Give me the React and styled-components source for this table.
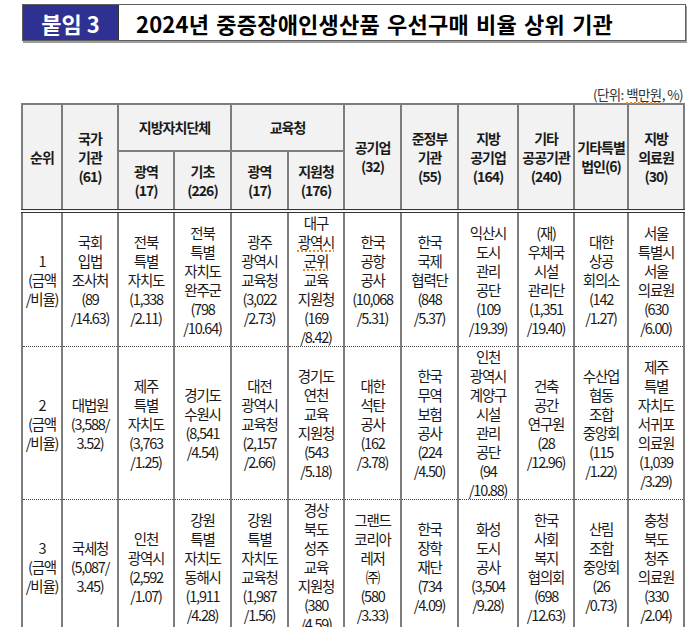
import React from 'react';
import styled, { createGlobalStyle } from 'styled-components';

const Global = createGlobalStyle`
  html, body { margin: 0; padding: 0; background: #fff; }
  body {
    font-family: "Noto Sans CJK KR", "Noto Sans", sans-serif;
    color: #111;
  }
`;

const Page = styled.div`
  padding: 4px 0 0 21px;
  width: 679px;
`;

const TitleBox = styled.div`
  box-sizing: border-box;
  margin-left: 1px;
  width: 664px;
  height: 37px;
  display: flex;
  border: 1px solid #5e5e5e;
  box-shadow: 1px 2px 0 #9c9c9c;
  background: #fff;
`;

const Badge = styled.div`
  width: 95px;
  flex: none;
  background: #2e3192;
  border-right: 1px solid #333;
  color: #fff;
  display: flex;
  align-items: center;
  justify-content: center;
  font-size: 22px;
  font-weight: 700;
  letter-spacing: 0;
`;

const TitleText = styled.div`
  padding-left: 17px;
  display: flex;
  align-items: center;
  font-size: 22px;
  font-weight: 700;
  letter-spacing: 0.2px;
  word-spacing: 2px;
  color: #000;
`;

const Unit = styled.div`
  width: 662px;
  margin-top: 45px;
  padding-bottom: 1px;
  text-align: right;
  font-size: 13.5px;
  line-height: 16px;
  color: #333;
  letter-spacing: -0.6px;
`;

const Squiggle = styled.span`
  text-decoration: underline dotted #e8892b;
  text-decoration-thickness: 1.5px;
  text-underline-offset: 2px;
`;

const Table = styled.table`
  border-collapse: collapse;
  table-layout: fixed;
  width: 662px;
  border: 2px solid #222;

  tbody tr:first-child td {
    border-top: 4px double #333;
  }
`;

const HeadRow = styled.tr`
  height: ${p => p.$h}px;
`;

const Th = styled.th`
  background: #f2f2f2;
  font-weight: 700;
  font-size: 14px;
  letter-spacing: -1px;
  line-height: 19px;
  padding: 0;
  text-align: center;
  vertical-align: middle;
  color: #1a1a1a;
  border: 2px solid #7d7d7d;
`;

const Row = styled.tr``;

const Td = styled.td`
  font-weight: 400;
  font-size: 14.5px;
  letter-spacing: -1.2px;
  line-height: 19px;
  padding: 0;
  text-align: center;
  vertical-align: middle;
  color: #1a1a1a;
  border-left: 2px solid #7d7d7d;
  border-right: 2px solid #7d7d7d;
  border-bottom: 1px dotted #444;
`;

const Line = styled.span`
  display: block;
  white-space: nowrap;
`;

const widths = [40, 56, 56, 57, 57, 56, 57, 57, 60, 56, 54, 56];

const Lines = ({ items }) =>
  items.map((t, i) => (
    <Line key={i}>{t}</Line>
  ));

const rows = [
  [
    ['1', '(금액', '/비율)'],
    ['국회', '입법', '조사처', '(89', '/14.63)'],
    ['전북', '특별', '자치도', '(1,338', '/2.11)'],
    ['전북', '특별', '자치도', '완주군', '(798', '/10.64)'],
    ['광주', '광역시', '교육청', '(3,022', '/2.73)'],
    ['대구', <Squiggle>광역시</Squiggle>, <Squiggle>군위</Squiggle>, '교육', '지원청', '(169', '/8.42)'],
    ['한국', '공항', '공사', '(10,068', '/5.31)'],
    ['한국', '국제', '협력단', '(848', '/5.37)'],
    ['익산시', '도시', '관리', '공단', '(109', '/19.39)'],
    ['(재)', '우체국', '시설', '관리단', '(1,351', '/19.40)'],
    ['대한', '상공', '회의소', '(142', '/1.27)'],
    ['서울', '특별시', '서울', '의료원', '(630', '/6.00)'],
  ],
  [
    ['2', '(금액', '/비율)'],
    ['대법원', '(3,588/', '3.52)'],
    ['제주', '특별', '자치도', '(3,763', '/1.25)'],
    ['경기도', '수원시', '(8,541', '/4.54)'],
    ['대전', '광역시', '교육청', '(2,157', '/2.66)'],
    ['경기도', '연천', '교육', '지원청', '(543', '/5.18)'],
    ['대한', '석탄', '공사', '(162', '/3.78)'],
    ['한국', '무역', '보험', '공사', '(224', '/4.50)'],
    ['인천', '광역시', '계양구', '시설', '관리', '공단', '(94', '/10.88)'],
    ['건축', '공간', '연구원', '(28', '/12.96)'],
    ['수산업', '협동', '조합', '중앙회', '(115', '/1.22)'],
    ['제주', '특별', '자치도', '서귀포', '의료원', '(1,039', '/3.29)'],
  ],
  [
    ['3', '(금액', '/비율)'],
    ['국세청', '(5,087/', '3.45)'],
    ['인천', '광역시', '(2,592', '/1.07)'],
    ['강원', '특별', '자치도', '동해시', '(1,911', '/4.28)'],
    ['강원', '특별', '자치도', '교육청', '(1,987', '/1.56)'],
    ['경상', '북도', '성주', '교육', '지원청', '(380', '/4.59)'],
    ['그랜드', '코리아', '레저', '㈜', '(580', '/3.33)'],
    ['한국', '장학', '재단', '(734', '/4.09)'],
    ['화성', '도시', '공사', '(3,504', '/9.28)'],
    ['한국', '사회', '복지', '협의회', '(698', '/12.63)'],
    ['산림', '조합', '중앙회', '(26', '/0.73)'],
    ['충청', '북도', '청주', '의료원', '(330', '/2.04)'],
  ],
];

export default function App() {
  return (
    <>
      <Global />
      <Page>
        <TitleBox>
          <Badge>붙임 3</Badge>
          <TitleText>2024년 중증장애인생산품 우선구매 비율 상위 기관</TitleText>
        </TitleBox>
        <Unit>
          (단위: <Squiggle>백만원</Squiggle>, %)
        </Unit>
        <Table>
          <colgroup>
            {widths.map((w, i) => (
              <col key={i} style={{ width: w }} />
            ))}
          </colgroup>
          <thead>
            <HeadRow $h={47}>
              <Th rowSpan={2}><Lines items={['순위']} /></Th>
              <Th rowSpan={2}><Lines items={['국가', '기관', '(61)']} /></Th>
              <Th colSpan={2}><Lines items={['지방자치단체']} /></Th>
              <Th colSpan={2}><Lines items={['교육청']} /></Th>
              <Th rowSpan={2}><Lines items={['공기업', '(32)']} /></Th>
              <Th rowSpan={2}><Lines items={['준정부', '기관', '(55)']} /></Th>
              <Th rowSpan={2}><Lines items={['지방', '공기업', '(164)']} /></Th>
              <Th rowSpan={2}><Lines items={['기타', '공공기관', '(240)']} /></Th>
              <Th rowSpan={2}><Lines items={['기타특별', '법인(6)']} /></Th>
              <Th rowSpan={2}><Lines items={['지방', '의료원', '(30)']} /></Th>
            </HeadRow>
            <HeadRow $h={60}>
              <Th><Lines items={['광역', '(17)']} /></Th>
              <Th><Lines items={['기초', '(226)']} /></Th>
              <Th><Lines items={['광역', '(17)']} /></Th>
              <Th><Lines items={['지원청', '(176)']} /></Th>
            </HeadRow>
          </thead>
          <tbody>
            {rows.map((r, ri) => (
              <Row key={ri}>
                {r.map((c, ci) => (
                  <Td key={ci}><Lines items={c} /></Td>
                ))}
              </Row>
            ))}
          </tbody>
        </Table>
      </Page>
    </>
  );
}
